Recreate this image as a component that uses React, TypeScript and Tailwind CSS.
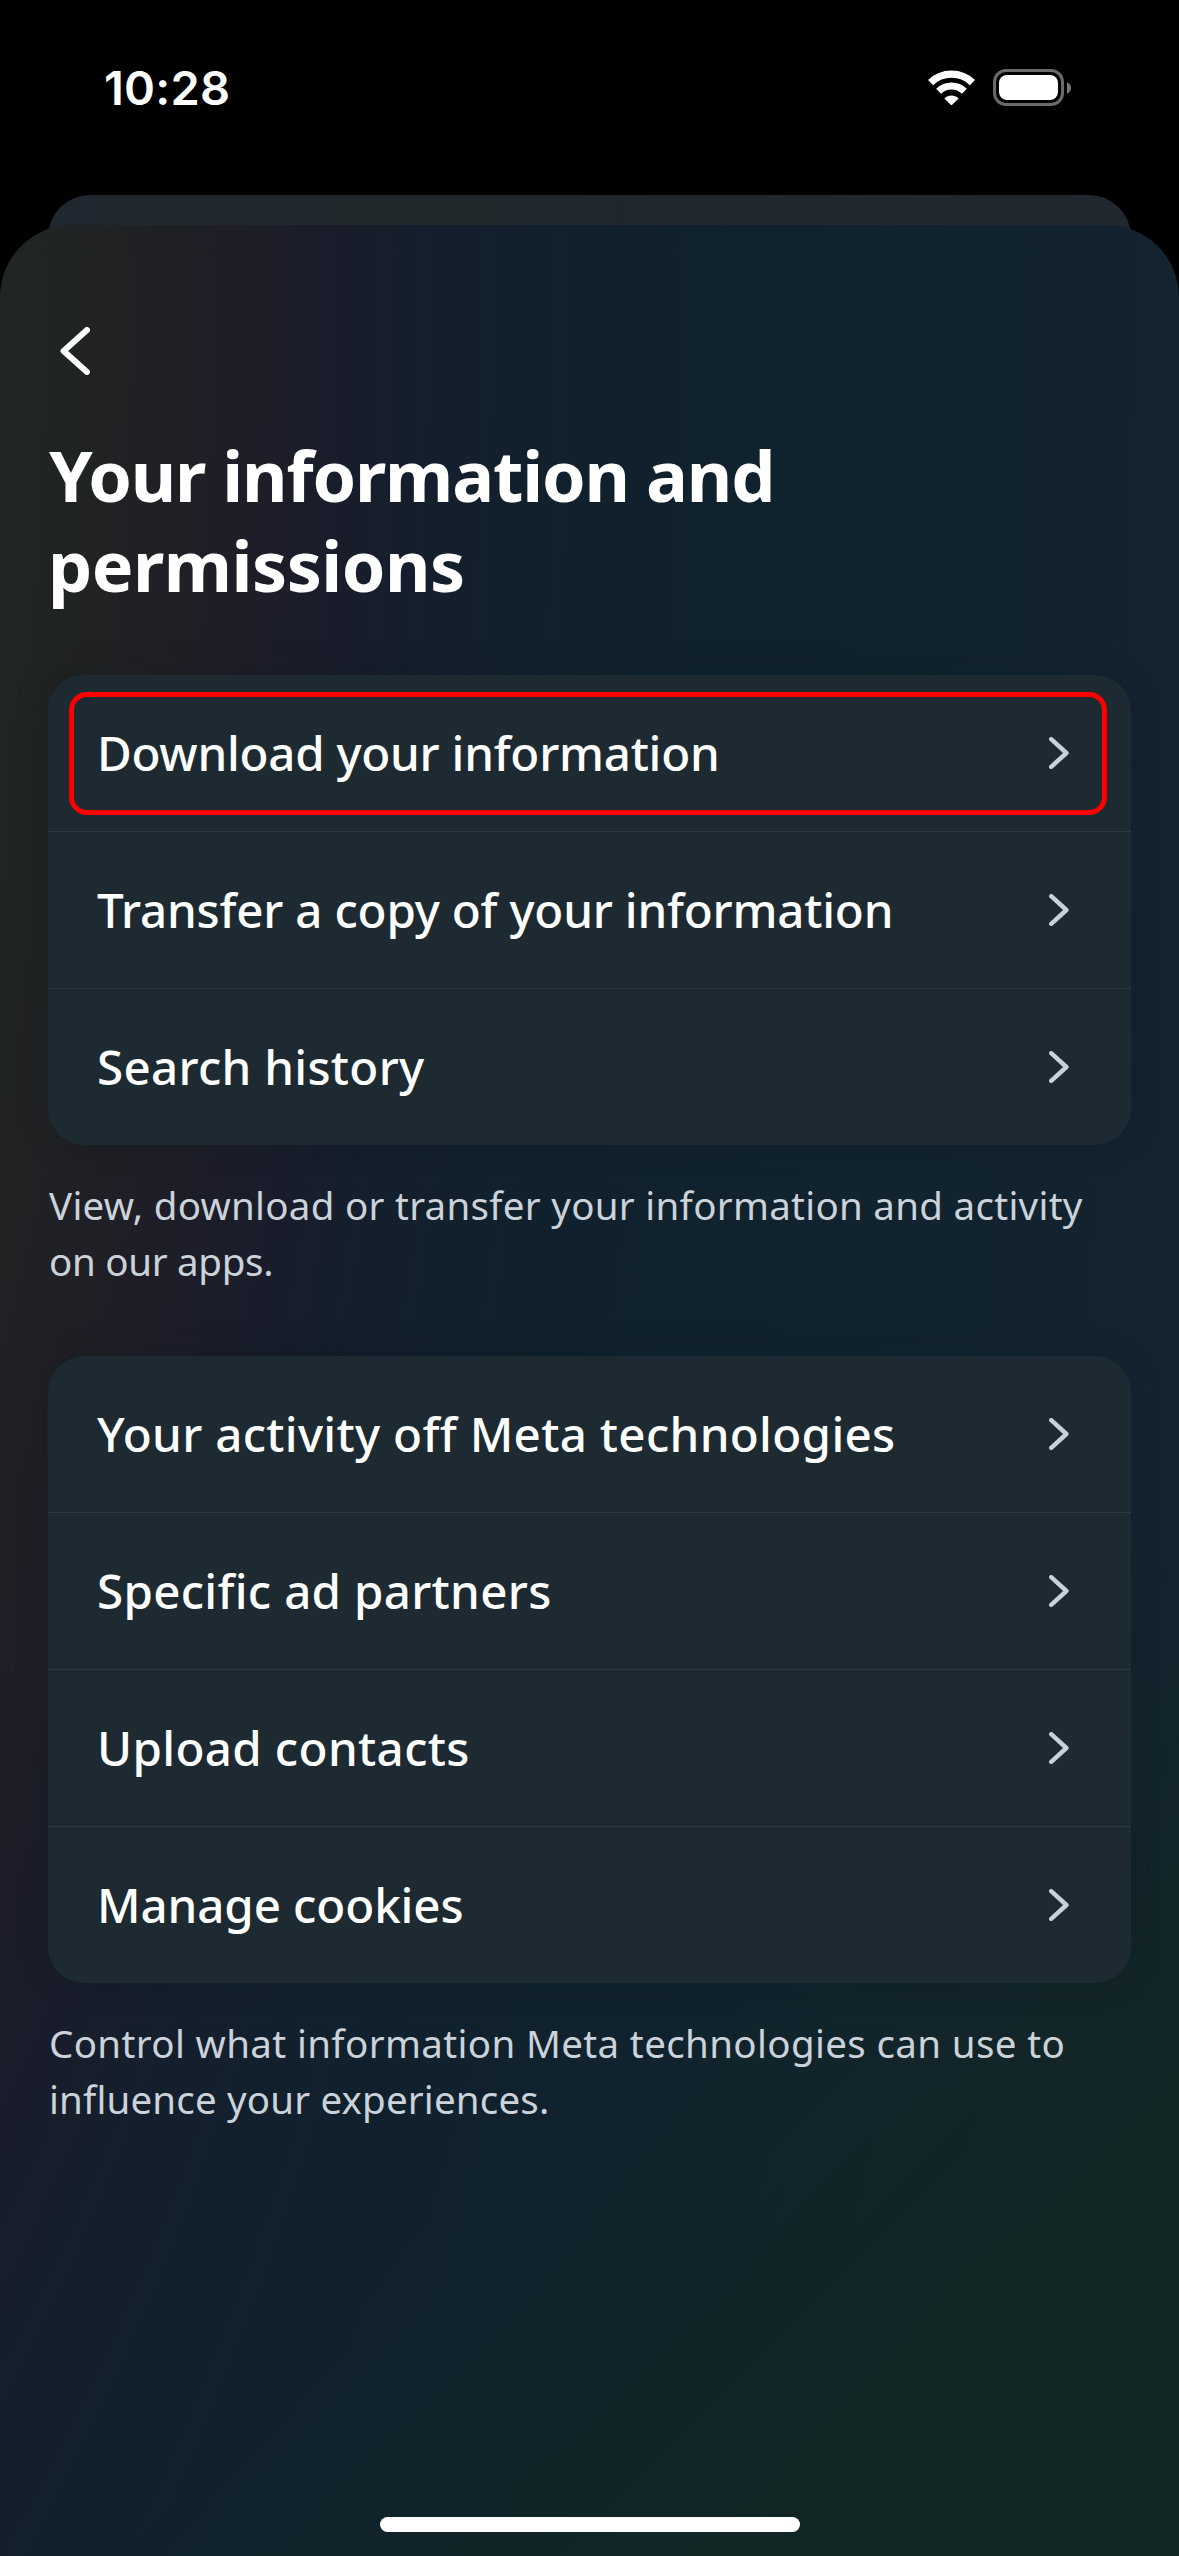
import React from "react";

type Item = { label: string; tracking: string; highlighted?: boolean };

const dataItems: Item[] = [
  { label: "Download your information", tracking: "tracking-[-0.25px]", highlighted: true },
  { label: "Transfer a copy of your information", tracking: "tracking-[-0.2px]" },
  { label: "Search history", tracking: "tracking-[0.3px]" },
];

const controlItems: Item[] = [
  { label: "Your activity off Meta technologies", tracking: "tracking-[0.32px]" },
  { label: "Specific ad partners", tracking: "tracking-[0.3px]" },
  { label: "Upload contacts", tracking: "tracking-[0.36px]" },
  { label: "Manage cookies", tracking: "tracking-[-0.1px]" },
];

function Chevron() {
  return (
    <svg className="h-8 w-5 shrink-0" viewBox="0 0 20 32" fill="none">
      <path d="M2.2 2.2 17.4 16 2.2 29.8" stroke="#c9d1da" strokeWidth="4.4" strokeLinecap="round" strokeLinejoin="round" />
    </svg>
  );
}

function StatusBar() {
  return (
    <div className="flex h-[195px] items-start justify-between pl-[104px] pr-[108px] pt-[59px]">
      <div className="font-['Inter',sans-serif] text-[47px] font-semibold leading-[58px] tracking-[0.2px]">10:28</div>
      <div className="flex items-center pt-[10px]">
        <svg className="h-9 w-[47px]" viewBox="0 0 47 36" fill="none">
          <path d="M2.6 12.6a30 30 0 0 1 41.8 0" stroke="#fff" strokeWidth="7.4" />
          <path d="M10.6 21.2a18.4 18.4 0 0 1 25.8 0" stroke="#fff" strokeWidth="7" />
          <path d="M16.4 28.4c4.3-3.8 9.9-3.8 14.2 0l-6.4 6.4c-.5.5-1 .5-1.5 0z" fill="#fff" />
        </svg>
        <div className="ml-[18px] h-[37px] w-[71px] rounded-[13px] border-[3px] border-[#6a6a6a] p-[3px]">
          <div className="h-full w-full rounded-[8px] bg-white" />
        </div>
        <svg className="ml-[3px] h-3 w-1" viewBox="0 0 4 12">
          <path d="M0 0C2.4 1.4 4 3.4 4 6s-1.600 4.600-4 6z" fill="#7a7a7a" />
        </svg>
      </div>
    </div>
  );
}

function Row({ item, last }: { item: Item; last: boolean }) {
  return (
    <li className={last ? "relative flex h-[156px] items-center justify-between pl-[49px] pr-[62px]" : "relative flex h-[157px] items-center justify-between border-b border-[#2c3841] pl-[49px] pr-[62px]"}>
      {item.highlighted && <div className="absolute left-[21px] top-[17px] h-[123px] w-[1038px] rounded-[18px] border-[5px] border-[#ff0000]" />}
      <span className={`whitespace-nowrap text-[47.5px] font-medium leading-[64px] ${item.tracking}`}>{item.label}</span>
      <Chevron />
    </li>
  );
}

function Card({ items }: { items: Item[] }) {
  return (
    <ul className="rounded-[36px] bg-[#1d2a32] shadow-[0_0_36px_rgba(8,20,24,0.18)]">
      {items.map((item, i) => (
        <Row key={item.label} item={item} last={i === items.length - 1} />
      ))}
    </ul>
  );
}

export default function App() {
  return (
    <div className="flex h-[2556px] w-[1179px] flex-col overflow-hidden bg-black font-['Noto_Sans',sans-serif] text-white">
      <StatusBar />
      <div className="mx-12 h-[100px] shrink-0 rounded-t-[42px] bg-[linear-gradient(90deg,#1f2830,#20282c_30%,#21272e)]" />
      <main className="relative -mt-[70px] flex grow flex-col rounded-t-[72px] bg-[linear-gradient(135deg,#11272300_69%,#112723_91%),radial-gradient(3300px_8300px_at_-600px_75px,#212524_18.8%,#202224_21.6%,#1f1e27_25%,#191d2b_28.8%,#141f2d_31.5%,#10212d_36%,#10232e_46%,#132330_54%)] px-12">
        <button className="ml-3 mt-[102px] h-12 w-[30px]" aria-label="Back">
          <svg className="h-12 w-[30px]" viewBox="0 0 30 48" fill="none">
            <path d="M27 3 3.600 24 27 45" stroke="#fff" strokeWidth="6" strokeLinecap="round" strokeLinejoin="round" />
          </svg>
        </button>
        <h1 className="mt-[55px] text-[70px] font-bold leading-[90px]">
          <span className="block whitespace-nowrap pl-px tracking-[-1.15px]">Your information and</span>
          <span className="block whitespace-nowrap tracking-[-0.5px]">permissions</span>
        </h1>
        <section className="mt-[65px]">
          <Card items={dataItems} />
          <p className="mt-8 text-[38.5px] leading-[56px] text-[#cbd2d9]">
            <span className="block whitespace-nowrap pl-px tracking-[0.28px]">View, download or transfer your information and activity</span>
            <span className="block whitespace-nowrap pl-px tracking-[-0.3px]">on our apps.</span>
          </p>
        </section>
        <section className="mt-[67px]">
          <Card items={controlItems} />
          <p className="mt-8 text-[38.5px] leading-[56px] text-[#cbd2d9]">
            <span className="block whitespace-nowrap pl-px tracking-[0.36px]">Control what information Meta technologies can use to</span>
            <span className="block whitespace-nowrap pl-px tracking-[0.16px]">influence your experiences.</span>
          </p>
        </section>
        <div className="mx-auto mb-6 mt-auto h-[15px] w-[420px] rounded-full bg-white" />
      </main>
    </div>
  );
}
